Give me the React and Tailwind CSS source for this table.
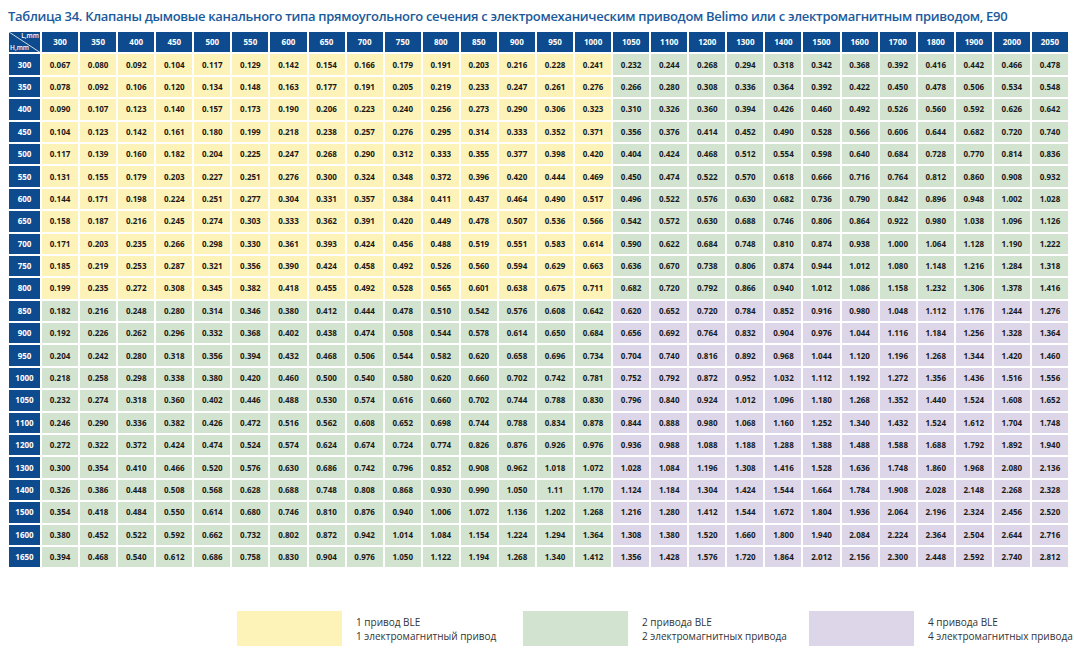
const cols = [300, 350, 400, 450, 500, 550, 600, 650, 700, 750, 800, 850, 900, 950, 1000, 1050, 1100, 1200, 1300, 1400, 1500, 1600, 1700, 1800, 1900, 2000, 2050];

const rows = [
  [300, "0.067 0.080 0.092 0.104 0.117 0.129 0.142 0.154 0.166 0.179 0.191 0.203 0.216 0.228 0.241 0.232 0.244 0.268 0.294 0.318 0.342 0.368 0.392 0.416 0.442 0.466 0.478"],
  [350, "0.078 0.092 0.106 0.120 0.134 0.148 0.163 0.177 0.191 0.205 0.219 0.233 0.247 0.261 0.276 0.266 0.280 0.308 0.336 0.364 0.392 0.422 0.450 0.478 0.506 0.534 0.548"],
  [400, "0.090 0.107 0.123 0.140 0.157 0.173 0.190 0.206 0.223 0.240 0.256 0.273 0.290 0.306 0.323 0.310 0.326 0.360 0.394 0.426 0.460 0.492 0.526 0.560 0.592 0.626 0.642"],
  [450, "0.104 0.123 0.142 0.161 0.180 0.199 0.218 0.238 0.257 0.276 0.295 0.314 0.333 0.352 0.371 0.356 0.376 0.414 0.452 0.490 0.528 0.566 0.606 0.644 0.682 0.720 0.740"],
  [500, "0.117 0.139 0.160 0.182 0.204 0.225 0.247 0.268 0.290 0.312 0.333 0.355 0.377 0.398 0.420 0.404 0.424 0.468 0.512 0.554 0.598 0.640 0.684 0.728 0.770 0.814 0.836"],
  [550, "0.131 0.155 0.179 0.203 0.227 0.251 0.276 0.300 0.324 0.348 0.372 0.396 0.420 0.444 0.469 0.450 0.474 0.522 0.570 0.618 0.666 0.716 0.764 0.812 0.860 0.908 0.932"],
  [600, "0.144 0.171 0.198 0.224 0.251 0.277 0.304 0.331 0.357 0.384 0.411 0.437 0.464 0.490 0.517 0.496 0.522 0.576 0.630 0.682 0.736 0.790 0.842 0.896 0.948 1.002 1.028"],
  [650, "0.158 0.187 0.216 0.245 0.274 0.303 0.333 0.362 0.391 0.420 0.449 0.478 0.507 0.536 0.566 0.542 0.572 0.630 0.688 0.746 0.806 0.864 0.922 0.980 1.038 1.096 1.126"],
  [700, "0.171 0.203 0.235 0.266 0.298 0.330 0.361 0.393 0.424 0.456 0.488 0.519 0.551 0.583 0.614 0.590 0.622 0.684 0.748 0.810 0.874 0.938 1.000 1.064 1.128 1.190 1.222"],
  [750, "0.185 0.219 0.253 0.287 0.321 0.356 0.390 0.424 0.458 0.492 0.526 0.560 0.594 0.629 0.663 0.636 0.670 0.738 0.806 0.874 0.944 1.012 1.080 1.148 1.216 1.284 1.318"],
  [800, "0.199 0.235 0.272 0.308 0.345 0.382 0.418 0.455 0.492 0.528 0.565 0.601 0.638 0.675 0.711 0.682 0.720 0.792 0.866 0.940 1.012 1.086 1.158 1.232 1.306 1.378 1.416"],
  [850, "0.182 0.216 0.248 0.280 0.314 0.346 0.380 0.412 0.444 0.478 0.510 0.542 0.576 0.608 0.642 0.620 0.652 0.720 0.784 0.852 0.916 0.980 1.048 1.112 1.176 1.244 1.276"],
  [900, "0.192 0.226 0.262 0.296 0.332 0.368 0.402 0.438 0.474 0.508 0.544 0.578 0.614 0.650 0.684 0.656 0.692 0.764 0.832 0.904 0.976 1.044 1.116 1.184 1.256 1.328 1.364"],
  [950, "0.204 0.242 0.280 0.318 0.356 0.394 0.432 0.468 0.506 0.544 0.582 0.620 0.658 0.696 0.734 0.704 0.740 0.816 0.892 0.968 1.044 1.120 1.196 1.268 1.344 1.420 1.460"],
  [1000, "0.218 0.258 0.298 0.338 0.380 0.420 0.460 0.500 0.540 0.580 0.620 0.660 0.702 0.742 0.781 0.752 0.792 0.872 0.952 1.032 1.112 1.192 1.272 1.356 1.436 1.516 1.556"],
  [1050, "0.232 0.274 0.318 0.360 0.402 0.446 0.488 0.530 0.574 0.616 0.660 0.702 0.744 0.788 0.830 0.796 0.840 0.924 1.012 1.096 1.180 1.268 1.352 1.440 1.524 1.608 1.652"],
  [1100, "0.246 0.290 0.336 0.382 0.426 0.472 0.516 0.562 0.608 0.652 0.698 0.744 0.788 0.834 0.878 0.844 0.888 0.980 1.068 1.160 1.252 1.340 1.432 1.524 1.612 1.704 1.748"],
  [1200, "0.272 0.322 0.372 0.424 0.474 0.524 0.574 0.624 0.674 0.724 0.774 0.826 0.876 0.926 0.976 0.936 0.988 1.088 1.188 1.288 1.388 1.488 1.588 1.688 1.792 1.892 1.940"],
  [1300, "0.300 0.354 0.410 0.466 0.520 0.576 0.630 0.686 0.742 0.796 0.852 0.908 0.962 1.018 1.072 1.028 1.084 1.196 1.308 1.416 1.528 1.636 1.748 1.860 1.968 2.080 2.136"],
  [1400, "0.326 0.386 0.448 0.508 0.568 0.628 0.688 0.748 0.808 0.868 0.930 0.990 1.050 1.11 1.170 1.124 1.184 1.304 1.424 1.544 1.664 1.784 1.908 2.028 2.148 2.268 2.328"],
  [1500, "0.354 0.418 0.484 0.550 0.614 0.680 0.746 0.810 0.876 0.940 1.006 1.072 1.136 1.202 1.268 1.216 1.280 1.412 1.544 1.672 1.804 1.936 2.064 2.196 2.324 2.456 2.520"],
  [1600, "0.380 0.452 0.522 0.592 0.662 0.732 0.802 0.872 0.942 1.014 1.084 1.154 1.224 1.294 1.364 1.308 1.380 1.520 1.660 1.800 1.940 2.084 2.224 2.364 2.504 2.644 2.716"],
  [1650, "0.394 0.468 0.540 0.612 0.686 0.758 0.830 0.904 0.976 1.050 1.122 1.194 1.268 1.340 1.412 1.356 1.428 1.576 1.720 1.864 2.012 2.156 2.300 2.448 2.592 2.740 2.812"],
];

// yellow: small section & small width; purple: big both; green otherwise
function cellColor(h, l) {
  const tallRow = h > 800;
  const wideCol = l > 1000;
  if (!tallRow && !wideCol) return "bg-[#fdf2b8]";
  if (tallRow && wideCol) return "bg-[#ddd6e8]";
  return "bg-[#d2e3d0]";
}

const legend = [
  { color: "bg-[#fdf2b8]", lines: ["1 привод BLE", "1 электромагнитный привод"] },
  { color: "bg-[#d2e3d0]", lines: ["2 привода BLE", "2 электромагнитных привода"] },
  { color: "bg-[#ddd6e8]", lines: ["4 привода BLE", "4 электромагнитных привода"] },
];

function Corner() {
  return (
    <div className="relative h-[20.4px] bg-[#0d4b8e] overflow-hidden text-white">
      <svg className="absolute inset-0 w-full h-full" viewBox="0 0 31 20" preserveAspectRatio="none">
        <line x1="0" y1="0" x2="31" y2="20" stroke="#ffffff" strokeWidth="0.8" />
      </svg>
      <span className="absolute right-[1px] top-[1px] text-[6.5px] leading-none font-semibold">L,mm</span>
      <span className="absolute left-[1px] bottom-[1px] text-[6.5px] leading-none font-semibold">H,mm</span>
    </div>
  );
}

export default function App() {
  return (
    <div className="w-[1074px] h-[654px] bg-white overflow-hidden pt-[6px] pl-[9px] font-['Open_Sans','Noto_Sans',sans-serif]">
      <h1 className="text-[13px] leading-[20px] font-semibold text-[#1b5a9c] -ml-[1px] tracking-[-0.3px] whitespace-nowrap">
        Таблица 34. Клапаны дымовые канального типа прямоугольного сечения с электромеханическим приводом Belimo или с электромагнитным приводом, E90
      </h1>

      <div className="mt-[6px] w-[1059px] grid grid-cols-[31px_repeat(27,minmax(0,1fr))] gap-[2px] text-[8px] font-bold">
        <Corner />
        {cols.map((c) => (
          <div key={c} className="h-[20.4px] bg-[#0d4b8e] text-white flex items-center justify-center">
            {c}
          </div>
        ))}
        {rows.map(([h, vals]) => {
          const list = vals.split(" ");
          return [
            <div key={"h" + h} className="h-[20.4px] bg-[#0d4b8e] text-white flex items-center justify-center">
              {h}
            </div>,
            ...list.map((v, i) => (
              <div
                key={h + "-" + i}
                className={`h-[20.4px] flex items-center justify-center text-[#1a1a1a] ${cellColor(h, cols[i])}`}
              >
                {v}
              </div>
            )),
          ];
        })}
      </div>

      <div className="mt-[44px] pl-[228px] flex">
        {legend.map((item, i) => (
          <div key={i} className="flex items-center w-[286px] shrink-0">
            <div className={`w-[105px] h-[35px] shrink-0 ${item.color}`} />
            <div className="ml-[14px] text-[10px] leading-[14px] text-[#333333] whitespace-nowrap">
              {item.lines.map((l) => (
                <div key={l}>{l}</div>
              ))}
            </div>
          </div>
        ))}
      </div>
    </div>
  );
}
